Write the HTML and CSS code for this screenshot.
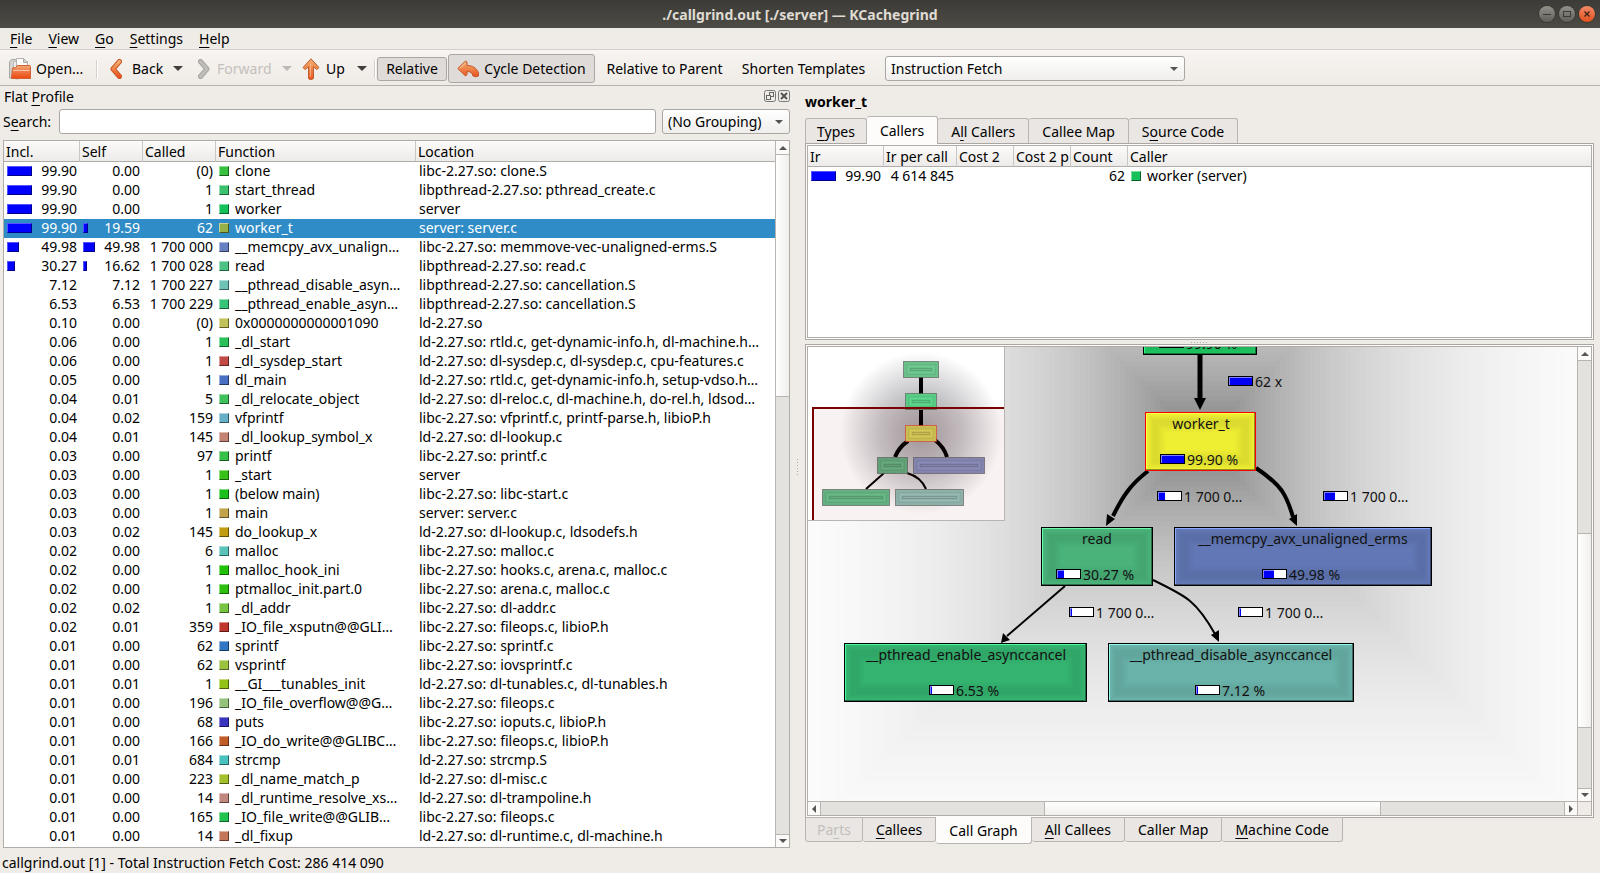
FILE: index.html
```html
<!DOCTYPE html>
<html lang="en">
<head>
<meta charset="utf-8">
<title>./callgrind.out [./server] — KCachegrind</title>
<link rel="stylesheet" href="styles.css">
</head>
<body>
<header class="titlebar">
  <h1 class="titlebar-text">./callgrind.out [./server] — KCachegrind</h1>
  <div class="window-buttons">
    <button class="win" aria-label="Minimize"><svg width="16" height="16"><path d="M4 8.5h8" stroke="#3c3b37" stroke-width="1"/></svg></button>
    <button class="win" aria-label="Maximize"><svg width="16" height="16"><rect x="4.500" y="5.500" width="7" height="5" fill="none" stroke="#3c3b37"/></svg></button>
    <button class="win win-close" aria-label="Close"><svg width="16" height="16"><path d="M5.500 5.500l5 5m0-5l-5 5" stroke="#3c2418" stroke-width="1.400"/></svg></button>
  </div>
</header>

<nav class="menubar">
  <button><u>F</u>ile</button><button><u>V</u>iew</button><button><u>G</u>o</button><button><u>S</u>ettings</button><button><u>H</u>elp</button>
</nav>

<div class="toolbar">
  <button class="tool tool-open">
    <svg width="22" height="22"><defs><linearGradient id="folder" x1="0" y1="0" x2="0" y2="1"><stop offset="0" stop-color="#f5a876"/><stop offset=".45" stop-color="#ec7a48"/><stop offset="1" stop-color="#f0480f"/></linearGradient><linearGradient id="orange" x1="0" y1="0" x2="0" y2="1"><stop offset="0" stop-color="#f3b374"/><stop offset="1" stop-color="#e9531d"/></linearGradient></defs><path d="M.5 20V3.500l2-2h6l1 2.500v17z" fill="#d5d3d0" stroke="#aaa7a3"/><path d="M4.500 10V3.500h14V12h-14z" fill="#efeeec" stroke="#bbb"/><path d="M7.500 8V.5h7l4 4V9h-11z" fill="#fbfbfa" stroke="#b5b2ae"/><path d="M14.500.5v4h4z" fill="#d8d6d3" stroke="#aaa"/><path d="M2.500 20.500l1-10.500 3-.5 2-2h12.500l.5 1v12z" fill="url(#folder)" stroke="#cf6232"/><path d="M4 12.500h16.500" stroke="#f8c4a4"/></svg>
    Open...</button>
  <span class="tool-sep"></span>
  <button class="tool tool-back"><svg width="12" height="20"><path d="M9.500 2.500L3 10l6.500 7.500" fill="none" stroke="#cb5525" stroke-width="5" stroke-linecap="round" stroke-linejoin="round"/><path d="M9.500 2.500L3 10l6.500 7.500" fill="none" stroke="url(#orange)" stroke-width="3" stroke-linecap="round" stroke-linejoin="round"/></svg>Back</button>
  <button class="drop" aria-label="Back history"><i class="tri"></i></button>
  <button class="tool tool-forward" disabled><svg width="12" height="20"><path d="M2.500 2.500L9 10l-6.500 7.500" fill="none" stroke="#a6a4a1" stroke-width="5" stroke-linecap="round" stroke-linejoin="round"/><path d="M2.500 2.500L9 10l-6.500 7.500" fill="none" stroke="#bfbdbb" stroke-width="3" stroke-linecap="round" stroke-linejoin="round"/></svg>Forward</button>
  <button class="drop drop-off" aria-label="Forward history" disabled><i class="tri"></i></button>
  <button class="tool tool-up"><svg width="18" height="22"><path d="M9 .8L17 9.500 14.800 11.500 11.500 8.800V20.500L9.500 21.500H8L6.500 20.500V8.800L3.200 11.500 1 9.500z" fill="url(#orange)" stroke="#bd5c2c"/><path d="M8.500 6v13" stroke="#f6c19b" opacity=".7"/></svg>Up</button>
  <button class="drop" aria-label="Up list"><i class="tri"></i></button>
  <span class="tool-sep"></span>
  <button class="toggle" aria-pressed="true">Relative</button>
  <button class="toggle toggle-cycle" aria-pressed="true"><svg width="22" height="18"><path d="M.8 8.500L8.500 1l1.500 1v3.500c5 0 9.500 2 11.500 7.500v3l-2.500.8-3-.8c-.5-3-2.500-4.500-6-4.500v3L8.500 16z" fill="url(#orange)" stroke="#c4552a"/><path d="M2.500 8.500L8.500 3" stroke="#f8cfa9"/></svg>Cycle Detection</button>
  <button class="flat">Relative to Parent</button>
  <button class="flat">Shorten Templates</button>
  <label class="combo combo-event"><select aria-label="Event type"><option>Instruction Fetch</option></select></label>
</div>

<main class="workspace">
  <section class="dock">
    <div class="dock-title">
      <h2>Flat <u>P</u>rofile</h2>
      <div class="dock-buttons">
        <button aria-label="Float"><svg width="12" height="12"><rect x=".5" y=".5" width="11" height="11" rx="2" fill="none" stroke="#777"/><rect x="5.500" y="2.500" width="4" height="4" fill="none" stroke="#666"/><rect x="2.500" y="5.500" width="4" height="4" fill="#efebe7" stroke="#666"/></svg></button>
        <button aria-label="Close panel"><svg width="12" height="12"><rect x=".5" y=".5" width="11" height="11" rx="2" fill="none" stroke="#777"/><path d="M3 3l6 6m0-6l-6 6" stroke="#555" stroke-width="2"/></svg></button>
      </div>
    </div>
    <div class="search-row">
      <label for="search">S<u>e</u>arch:</label>
      <input id="search" type="text">
      <label class="combo combo-group"><select aria-label="Grouping"><option>(No Grouping)</option></select></label>
    </div>
    <div class="list-frame">
      <div class="list-view">
        <table class="grid">
          <colgroup><col class="c-incl"><col class="c-self"><col class="c-called"><col class="c-func"><col></colgroup>
          <thead><tr><th>Incl.</th><th>Self</th><th>Called</th><th>Function</th><th>Location</th></tr></thead>
          <tbody id="profile"></tbody>
        </table>
      </div>
      <div class="vbar">
        <button aria-label="Scroll up"><i class="tri tri-up"></i></button>
        <div class="thumb thumb-profile"></div><div class="groove groove-profile"></div>
        <button aria-label="Scroll down"><i class="tri"></i></button>
      </div>
    </div>
  </section>

  <div class="splitter"><i class="grip-v"></i></div>

  <section class="detail">
    <h2 class="detail-title">worker_t</h2>
    <div class="tabs tabs-top" role="tablist">
      <button role="tab"><u>T</u>ypes</button><button role="tab" aria-selected="true">Callers</button><button role="tab">A<u>l</u>l Callers</button><button role="tab">Callee Map</button><button role="tab">S<u>o</u>urce Code</button>
    </div>
    <div class="pane pane-callers">
      <div class="list-frame">
        <table class="grid">
          <colgroup><col class="c-ir"><col class="c-call"><col class="c-cost"><col class="c-cost"><col class="c-cost"><col></colgroup>
          <thead><tr><th>Ir</th><th>Ir per call</th><th>Cost 2</th><th>Cost 2 p</th><th>Count</th><th>Caller</th></tr></thead>
          <tbody id="callers"></tbody>
        </table>
      </div>
    </div>
    <div class="splitter-h"><i class="grip-h"></i></div>
    <div class="pane pane-graph">
      <div class="graph-frame">
        <svg class="graph" id="graph" role="img" aria-label="Call graph"></svg>
        <div class="vbar">
          <button aria-label="Scroll up"><i class="tri tri-up"></i></button>
          <div class="groove graph-v1"></div><div class="thumb graph-v2"></div><div class="groove graph-v3"></div>
          <button aria-label="Scroll down"><i class="tri"></i></button>
        </div>
        <div class="hbar">
          <button aria-label="Scroll left"><i class="tri tri-left"></i></button>
          <div class="groove graph-h1"></div><div class="thumb graph-h2"></div><div class="groove graph-h3"></div>
          <button aria-label="Scroll right"><i class="tri tri-right"></i></button>
        </div>
        <div class="corner"></div>
      </div>
    </div>
    <div class="tabs tabs-bottom" role="tablist">
      <button role="tab" disabled>Pa<u>r</u>ts</button><button role="tab"><u>C</u>allees</button><button role="tab" aria-selected="true">Call Graph</button><button role="tab"><u>A</u>ll Callees</button><button role="tab">Caller Map</button><button role="tab"><u>M</u>achine Code</button>
    </div>
  </section>
</main>

<footer class="statusbar">callgrind.out [1] - Total Instruction Fetch Cost: 286 414 090</footer>
<script src="app.js"></script>
</body>
</html>
```

FILE: styles.css
```css
* { box-sizing: border-box; }

body {
  margin: 0;
  height: 100vh;
  display: flex;
  flex-direction: column;
  background: #efebe7;
  color: #000;
  font: 14px/19px "Noto Sans", "Open Sans", sans-serif;
  overflow: hidden;
}

button, input, select {
  font: inherit;
  color: inherit;
  margin: 0;
  padding: 0;
  border: 0;
  background: none;
}

h1, h2 { margin: 0; font-size: 14px; line-height: 19px; }
u { text-underline-offset: 3px; text-decoration-skip-ink: none; }
svg { display: block; flex: none; }

/* Title bar */
.titlebar {
  height: 28px;
  display: grid;
  grid-template-columns: 1fr auto 1fr;
  align-items: center;
  background: linear-gradient(#3c3b37, #4d4b45);
  color: #dfdbd2;
}
.titlebar-text { grid-column: 2; }
.window-buttons { display: flex; justify-content: flex-end; gap: 4px; padding-right: 5px; }
.win {
  width: 16px;
  height: 16px;
  border-radius: 50%;
  background: linear-gradient(#92918a, #5f5e58);
  box-shadow: 0 0 0 1px #383732;
}
.win-close { background: linear-gradient(#f28a68, #e2501c); }

/* Menu bar */
.menubar { height: 22px; display: flex; padding-left: 2px; border-bottom: 1px solid #d3cfcb; }
.menubar button { padding: 0 8px; }

/* Toolbar */
.toolbar {
  height: 36px;
  display: flex;
  align-items: center;
  padding-top: 2px;
  background: linear-gradient(#f7f4f1, #efebe6);
  border-bottom: 1px solid #b5b1ac;
  white-space: nowrap;
}
.tool { display: flex; align-items: center; }
.tool-open { width: 96px; padding-left: 9px; gap: 5px; }
.tool-back { width: 68px; padding-left: 12px; gap: 10px; }
.tool-forward { width: 86px; padding-left: 8px; gap: 7px; }
.tool-up { width: 52px; padding-left: 4px; gap: 6px; }
.tool:disabled { color: #c3c0bd; }
.drop { width: 24px; display: flex; justify-content: center; }
.drop-off { width: 22px; opacity: 0.3; }
.tool-sep { width: 2px; height: 18px; background: #d4d0cc; border-right: 1px solid #fff; }
.toggle {
  display: flex;
  align-items: center;
  justify-content: center;
  gap: 5px;
  width: 70px;
  height: 24px;
  margin-left: 1px;
  border: 1px solid #aaa6a2;
  border-radius: 3px;
  background: #dfdbd8;
}
.toggle-cycle { width: 147px; height: 29px; }
.flat { width: 139px; text-align: center; }

.tri {
  width: 0;
  height: 0;
  border: 5px solid transparent;
  border-top-color: #403f3c;
  border-bottom: 0;
}
.vbar .tri, .hbar .tri { border-width: 4px; border-top-color: #555; border-bottom-width: 0; }
.vbar .tri-up { border: 4px solid transparent; border-bottom-color: #555; border-top: 0; }
.hbar .tri-left { border: 4px solid transparent; border-right-color: #555; border-left: 0; }
.hbar .tri-right { border: 4px solid transparent; border-left-color: #555; border-right: 0; }

.combo { position: relative; display: block; height: 25px; }
.combo select {
  width: 100%;
  height: 100%;
  appearance: none;
  padding: 0 5px;
  border: 1px solid #aaa6a2;
  border-radius: 3px;
  background: linear-gradient(#fff, #efeeec);
}
.combo::after {
  content: "";
  position: absolute;
  right: 7px;
  top: 11px;
  border: 4px solid transparent;
  border-top-color: #555;
  border-bottom: 0;
}
.combo-event { width: 300px; margin-left: 12px; }
.combo-group { width: 128px; }

/* Workspace */
.workspace { flex: 1; min-height: 0; display: flex; }
.dock { flex: 0 0 49.375%; min-width: 0; display: flex; flex-direction: column; padding: 1px 0 0 3px; }
.dock-title { height: 22px; display: flex; justify-content: space-between; align-items: center; padding: 0 0 4px 1px; }
.dock-title h2 { font-weight: 400; }
.dock-buttons { display: flex; gap: 2px; }
.search-row { height: 25px; display: flex; align-items: center; gap: 6px; margin-bottom: 6px; }
.search-row > label:first-child { width: 50px; }
.search-row input {
  flex: 1;
  min-width: 0;
  height: 25px;
  padding: 0 5px;
  border: 1px solid #aaa6a2;
  border-radius: 3px;
  background: #fff;
}
.list-frame { display: flex; flex: 1; min-height: 0; border: 1px solid #b0aca8; background: #fff; align-items: stretch; }
.list-view { flex: 1; min-width: 0; overflow: hidden; }

.grid { width: 100%; table-layout: fixed; border-collapse: separate; border-spacing: 0; align-self: flex-start; }
.grid th {
  height: 21px;
  padding: 1px 0 0 2px;
  text-align: left;
  font-weight: 400;
  line-height: 19px;
  background: linear-gradient(#fcfbf9, #ecebe9);
  border-right: 1px solid #c9c6c3;
  border-bottom: 1px solid #b0aca8;
  white-space: nowrap;
  overflow: hidden;
}
.grid th:last-child { border-right: 0; }
.grid td { height: 19px; padding: 0 3px 2px; line-height: 17px; white-space: nowrap; }
.grid tr.selected td { background: #308cc6; color: #fff; }
.c-incl { width: 76px; }
.c-self { width: 63px; }
.c-called { width: 73px; }
.c-func { width: 200px; }
.c-ir { width: 76px; }
.c-call { width: 73px; }
.c-cost { width: 57px; }
.num { text-align: right; }
.cell { display: flex; align-items: center; justify-content: space-between; }
.bar { height: 10px; background: #00f; border: 1px solid; border-color: #55f #00008c #00008c #55f; }
.named { display: flex; align-items: center; gap: 6px; }
.swatch { width: 10px; height: 10px; flex: none; border: 1px solid; border-color: #ffffff70 #00000080 #00000080 #ffffff70; }

/* Scroll bars */
.vbar { width: 14px; display: flex; flex-direction: column; border-left: 1px solid #b8b4b0; }
.hbar { height: 14px; display: flex; border-top: 1px solid #b8b4b0; }
.vbar button, .hbar button {
  flex: none;
  width: 13px;
  height: 13px;
  display: flex;
  align-items: center;
  justify-content: center;
  background: #fbfaf9;
}
.groove { background: #e3e2df; }
.thumb { background: linear-gradient(90deg, #fff, #f0efed); }
.vbar .thumb { border: solid #b8b4b0; border-width: 1px 0; }
.vbar .groove + button { border-top: 1px solid #b8b4b0; }
.vbar button + .groove { border-top: 1px solid #b8b4b0; }
.hbar .thumb { border: solid #b8b4b0; border-width: 0 1px; background: linear-gradient(#fff, #f0efed); }
.hbar button:first-child { border-right: 1px solid #b8b4b0; }
.hbar button:last-child { border-left: 1px solid #b8b4b0; }
.thumb-profile { flex: 242; }
.groove-profile { flex: 438; }
.graph-v1 { flex: 173; }
.graph-v2 { flex: 194; }
.graph-v3 { flex: 60; }
.graph-h1 { flex: 223; }
.graph-h2 { flex: 336; }
.graph-h3 { flex: 183; }

/* Splitters */
.splitter { width: 15px; display: flex; align-items: center; justify-content: center; }
.splitter-h { height: 4px; display: flex; align-items: center; justify-content: center; }
.grip-v { width: 1px; height: 17px; background: repeating-linear-gradient(#aaa 0 1px, transparent 1px 3px); }
.grip-h { width: 17px; height: 1px; background: repeating-linear-gradient(90deg, #aaa 0 1px, transparent 1px 3px); }

/* Right-hand side */
.detail { flex: 1; min-width: 0; display: flex; flex-direction: column; padding: 6px 6px 5px 0; }
.detail-title { height: 24px; }
.tabs { display: flex; flex: none; }
.tabs button {
  height: 26px;
  padding: 0 13px;
  border: 1px solid #b8b4b0;
  border-left-width: 0;
  background: #e9e6e3;
}
.tabs button:first-child { border-left-width: 1px; padding: 0 11px; }
.tabs button:disabled { color: #c3c0bd; }
.tabs [aria-selected="true"] { height: 28px; background: #fdfcfb; position: relative; z-index: 1; }
.tabs-top { height: 28px; align-items: flex-end; }
.tabs-top button { border-radius: 3px 3px 0 0; border-bottom: 0; }
.tabs-bottom { height: 26px; align-items: flex-start; margin-top: -1px; }
.tabs-bottom button { border-radius: 0 0 3px 3px; height: 25px; }
.tabs-bottom [aria-selected="true"] { height: 27px; border-top: 0; }
.pane { display: flex; padding: 1px; border: 1px solid #aaa6a2; background: #fdfcfb; min-height: 0; }
.tabs-top + .pane { margin-top: -1px; }
.pane-callers { flex: 196; }
.pane-graph { flex: 476; }
.graph-frame {
  flex: 1;
  min-width: 0;
  display: grid;
  grid-template: minmax(0, 1fr) 14px / minmax(0, 1fr) 14px;
  border: 1px solid #b0aca8;
  background: #fff;
}
.graph { width: 100%; height: 100%; overflow: hidden; }
.graph text { font: 14px "Noto Sans", "Open Sans", sans-serif; fill: #111; }
.graph .name { text-anchor: middle; }
.corner { border: solid #b8b4b0; border-width: 1px 0 0 1px; background: #efebe7; }

.statusbar { height: 25px; padding: 5px 2px 0; }
```

FILE: app.js
```js
const profile = [
  ["99.90", "0.00", "(0)", "#37c13f", "clone", "libc-2.27.so: clone.S"],
  ["99.90", "0.00", "1", "#3cc26f", "start_thread", "libpthread-2.27.so: pthread_create.c"],
  ["99.90", "0.00", "1", "#14c159", "worker", "server"],
  ["99.90", "19.59", "62", "#94b048", "worker_t", "server: server.c"],
  ["49.98", "49.98", "1 700 000", "#6680c4", "__memcpy_avx_unalign…", "libc-2.27.so: memmove-vec-unaligned-erms.S"],
  ["30.27", "16.62", "1 700 028", "#4ec285", "read", "libpthread-2.27.so: read.c"],
  ["7.12", "7.12", "1 700 227", "#6ec3b8", "__pthread_disable_asyn…", "libpthread-2.27.so: cancellation.S"],
  ["6.53", "6.53", "1 700 229", "#36c378", "__pthread_enable_asyn…", "libpthread-2.27.so: cancellation.S"],
  ["0.10", "0.00", "(0)", "#c0c158", "0x0000000000001090", "ld-2.27.so"],
  ["0.06", "0.00", "1", "#2bc05a", "_dl_start", "ld-2.27.so: rtld.c, get-dynamic-info.h, dl-machine.h…"],
  ["0.06", "0.00", "1", "#c14a45", "_dl_sysdep_start", "ld-2.27.so: dl-sysdep.c, dl-sysdep.c, cpu-features.c"],
  ["0.05", "0.00", "1", "#4a6fc2", "dl_main", "ld-2.27.so: rtld.c, get-dynamic-info.h, setup-vdso.h…"],
  ["0.04", "0.01", "5", "#3fc15c", "_dl_relocate_object", "ld-2.27.so: dl-reloc.c, dl-machine.h, do-rel.h, ldsod…"],
  ["0.04", "0.02", "159", "#66afc4", "vfprintf", "libc-2.27.so: vfprintf.c, printf-parse.h, libioP.h"],
  ["0.04", "0.01", "145", "#c38272", "_dl_lookup_symbol_x", "ld-2.27.so: dl-lookup.c"],
  ["0.03", "0.00", "97", "#38bf4a", "printf", "libc-2.27.so: printf.c"],
  ["0.03", "0.00", "1", "#37c015", "_start", "server"],
  ["0.03", "0.00", "1", "#1cc01c", "(below main)", "libc-2.27.so: libc-start.c"],
  ["0.03", "0.00", "1", "#c1a24d", "main", "server: server.c"],
  ["0.03", "0.02", "145", "#c09c12", "do_lookup_x", "ld-2.27.so: dl-lookup.c, ldsodefs.h"],
  ["0.02", "0.00", "6", "#59c2b9", "malloc", "libc-2.27.so: malloc.c"],
  ["0.02", "0.00", "1", "#23c00a", "malloc_hook_ini", "libc-2.27.so: hooks.c, arena.c, malloc.c"],
  ["0.02", "0.00", "1", "#2ec00e", "ptmalloc_init.part.0", "libc-2.27.so: arena.c, malloc.c"],
  ["0.02", "0.02", "1", "#79c242", "_dl_addr", "libc-2.27.so: dl-addr.c"],
  ["0.02", "0.01", "359", "#c1352f", "_IO_file_xsputn@@GLI…", "libc-2.27.so: fileops.c, libioP.h"],
  ["0.01", "0.00", "62", "#3076c2", "sprintf", "libc-2.27.so: sprintf.c"],
  ["0.01", "0.00", "62", "#9ac23f", "vsprintf", "libc-2.27.so: iovsprintf.c"],
  ["0.01", "0.01", "1", "#93c217", "__GI___tunables_init", "ld-2.27.so: dl-tunables.c, dl-tunables.h"],
  ["0.01", "0.00", "196", "#94c27c", "_IO_file_overflow@@G…", "libc-2.27.so: fileops.c"],
  ["0.01", "0.00", "68", "#3a33bf", "puts", "libc-2.27.so: ioputs.c, libioP.h"],
  ["0.01", "0.00", "166", "#c15c27", "_IO_do_write@@GLIBC…", "libc-2.27.so: fileops.c, libioP.h"],
  ["0.01", "0.01", "684", "#48c2c1", "strcmp", "ld-2.27.so: strcmp.S"],
  ["0.01", "0.00", "223", "#a2c12c", "_dl_name_match_p", "ld-2.27.so: dl-misc.c"],
  ["0.01", "0.00", "14", "#c2877f", "_dl_runtime_resolve_xs…", "ld-2.27.so: dl-trampoline.h"],
  ["0.01", "0.00", "165", "#20c250", "_IO_file_write@@GLIB…", "libc-2.27.so: fileops.c"],
  ["0.01", "0.00", "14", "#c27657", "_dl_fixup", "ld-2.27.so: dl-runtime.c, dl-machine.h"]
];

const cost = v => `<div class="cell">${v > 10 ? `<i class="bar" style="width:${Math.round(v / 4)}px"></i>` : "<i></i>"}<span>${v}</span></div>`;
const named = (color, name) => `<div class="named"><i class="swatch" style="background-color:${color}"></i>${name}</div>`;

document.getElementById("profile").innerHTML = profile.map(([incl, self, called, color, name, loc]) =>
  `<tr${name === "worker_t" ? ' class="selected"' : ""}><td>${cost(incl)}</td><td>${cost(self)}</td>` +
  `<td class="num">${called}</td><td>${named(color, name)}</td><td>${loc}</td></tr>`).join("");

document.getElementById("callers").innerHTML =
  `<tr><td>${cost("99.90")}</td><td class="num">4 614 845</td><td></td><td></td><td class="num">62</td><td>${named("#14c159", "worker (server)")}</td></tr>`;

/* Call graph */
const rect = (x, y, w, h, fill, extra = "") => `<rect x="${x}" y="${y}" width="${w}" height="${h}" fill="${fill}" ${extra}/>`;
const line = (d, w) => `<path d="${d}" fill="none" stroke="#000" stroke-width="${w}"/>`;
const head = pts => `<polygon points="${pts}"/>`;

/* Square halo around the active function, 5px per shade */
function halo(cx, cy) {
  let out = "";
  for (let i = 87; i >= 0; i--) {
    const c = 265 - Math.floor(130 / Math.pow(1.03, i));
    const r = 15 + 5 * i;
    out += rect(cx - r, cy - r, 2 * r, 2 * r, `rgb(${c},${c},${c})`);
  }
  return out;
}

function meter(x, y, pct) {
  const w = Math.max(2, Math.round(23 * pct / 100));
  return rect(x, y, 25, 10, "#000") + rect(x + 1, y + 1, 23, 8, "#fff") +
    rect(x + 1, y + 1, w, 8, "#7f7fff") + rect(x + 2, y + 2, w - 1, 7, "#0000f4");
}

function shade(rgb, f) { return `rgb(${rgb.map(v => Math.min(255, Math.round(v * f))).join(",")})`; }

function node(x, y, w, rgb, name, pct, mx, edge = "#000") {
  const h = 59;
  let out = rect(x, y, w, h, edge) + rect(x + 1, y + 1, w - 2, h - 2, shade(rgb, 0.6)) +
    rect(x + 1, y + 1, w - 3, h - 3, shade(rgb, 1.4));
  for (let i = 2; i < 28; i++) {
    const f = i < 8 ? 1 - (i - 2) * 0.014 : i < 13 ? 0.92 : Math.min(1, 0.92 + (i - 12) * 0.009);
    out += rect(x + i, y + i, w - 2 * i, h - 2 * i, shade(rgb, f));
  }
  if (name) out += `<text class="name" x="${x + Math.round(w / 2)}" y="${y + 17}">${name}</text>`;
  return out + meter(mx, y + 42, pct) + `<text x="${mx + 27}" y="${y + 53}">${pct} %</text>`;
}

const label = (x, y, pct, text) => meter(x, y, pct) + `<text x="${x + 27}" y="${y + 11}">${text}</text>`;

function mini(x, y, w, rgb, edge = "#555") {
  const h = 17;
  const c = k => shade(rgb, k);
  let out = rect(x + .5, y + .5, w - 1, h - 1, c(1), `stroke="${edge}" stroke-opacity=".6"`);
  [[3, .95], [5, 1.06], [7, .86]].forEach(([i, k]) => {
    out += rect(x + i + .5, y + i + .5, w - 2 * i - 1, Math.max(1, h - 2 * i - 1), "none", `stroke="${c(k)}"`);
  });
  return out;
}

const overview =
  rect(0, 0, 196, 173, "#fff") +
  `<circle cx="113" cy="86" r="81" fill="url(#glow)"/>` +
  line("M113 30V47M113 63V79", 4) +
  line("M100 94Q91 100 87 110M127 93Q136 100 139 110", 4) +
  line("M76 126L58 142M99 126Q113 130 118 142", 2) +
  mini(95, 14, 36, [105, 192, 137]) + mini(97, 46, 32, [88, 203, 132]) +
  mini(97, 78, 32, [205, 200, 86], "#e03030") + mini(69, 110, 31, [96, 170, 126]) +
  mini(105, 110, 72, [130, 140, 184]) + mini(14, 142, 68, [98, 186, 135]) + mini(87, 142, 69, [142, 187, 178]) +
  `<path d="M5 173V61H196V173z" fill="#8b0000" fill-opacity=".05"/><path d="M5 173V61H196" fill="none" stroke="#7b0000" stroke-width="2"/>` +
  `<path d="M0 173.5H196.500V0" fill="none" stroke="#b8b4b0"/>`;

/* The canvas origin is the upper left corner of the visible area */
document.getElementById("graph").innerHTML =
  `<defs><radialGradient id="glow"><stop offset="0" stop-color="#a09da0"/><stop offset=".5" stop-color="#c6c5c8"/><stop offset="1" stop-color="#fff"/></radialGradient></defs>` +
  halo(392, 94) +
  line("M392 8V54", 5) + head("386,51 398,51 392,63") +
  line("M340 124Q326 135 319 145Q313 153 305 169", 4) + head("299,167 307,172 298,179") +
  line("M448 121Q466 133 474 144Q480 153 485 170", 4) + head("481,172 489,167 489,179") +
  line("M257 239L199 289", 2) + head("195,286 202,293 193,296") +
  line("M345 233Q374 247 382 254Q394 264 407 287", 2) + head("403,288 411,283 411,295") +
  node(335, -51, 114, [30, 195, 95], "", "99.90", 351) +
  node(337, 65, 111, [238, 238, 51], "worker_t", "99.90", 352, "#f00") +
  node(233, 180, 112, [74, 179, 122], "read", "30.27", 248) +
  node(366, 180, 258, [98, 120, 182], "__memcpy_avx_unaligned_erms", "49.98", 454) +
  node(36, 296, 243, [52, 180, 112], "__pthread_enable_asynccancel", "6.53", 121) +
  node(300, 296, 246, [105, 179, 170], "__pthread_disable_asynccancel", "7.12", 387) +
  label(420, 29, 99.9, "62 x") + label(349, 144, 30.27, "1 700 0…") + label(515, 144, 49.98, "1 700 0…") +
  label(261, 260, 6.53, "1 700 0…") + label(430, 260, 7.12, "1 700 0…") +
  overview;
```
